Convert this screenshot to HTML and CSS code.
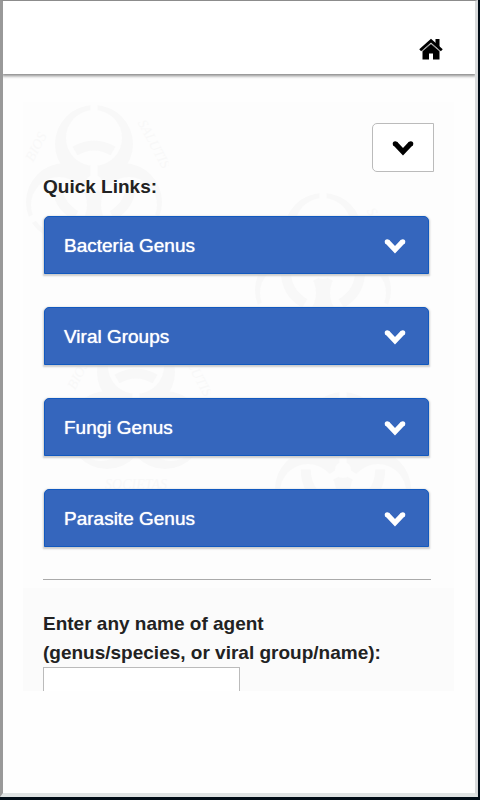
FILE: index.html
```html
<!DOCTYPE html>
<html lang="en">
<head>
<meta charset="utf-8">
<meta name="viewport" content="width=device-width, initial-scale=1">
<title>Quick Links</title>
<link rel="stylesheet" href="styles.css">
</head>
<body>
<svg class="defs" aria-hidden="true">
  <symbol id="chevron" viewBox="0 0 22 16"><path d="M3.200 3.500 11 11.800 18.800 3.500" fill="none" stroke="currentColor" stroke-width="5.200" stroke-linejoin="miter"/><circle cx="3.200" cy="3.700" r="2.500" fill="currentColor"/><circle cx="18.800" cy="3.700" r="2.500" fill="currentColor"/></symbol>
</svg>
<div class="frame">
  <header class="topbar">
    <a class="home" href="#" aria-label="Home">
      <svg viewBox="0 0 24 22"><path d="M12 5.600 3.500 12.600V21.500H10V15.500h4v6h6.500V12.600z"/><path d="M1.200 12.200 12 2.600 22.800 12.200" fill="none" stroke="#000" stroke-width="2.800"/><path d="M16.500 1h4v9L16.500 6.500z"/><path d="M3.400 13.200 12 5.700 20.600 13.200" fill="none" stroke="#bbb" stroke-width="0.800"/></svg>
    </a>
  </header>
  <main class="panel">
    <section class="links">
      <div class="marks" aria-hidden="true">
        <svg class="seal seal-a" viewBox="-75 -85 150 170">
          <mask id="cut">
            <rect x="-75" y="-85" width="150" height="170" fill="#fff"/>
            <circle cx="0" cy="-45" r="28" fill="#000"/>
            <circle cx="35" cy="22" r="28" fill="#000"/>
            <circle cx="-35" cy="22" r="28" fill="#000"/>
            <path d="M0 -60V-85M0 -18V0M0 0 74 43M0 0-74 43" stroke="#000" stroke-width="7"/>
            <circle r="8" fill="#000"/>
          </mask>
          <g id="seal" fill="currentColor">
            <g mask="url(#cut)">
              <circle cx="0" cy="-39" r="39"/>
              <circle cx="29" cy="19" r="39"/>
              <circle cx="-29" cy="19" r="39"/>
            </g>
            <g fill="none" stroke="currentColor" stroke-width="10">
              <path d="M-19-32Q0-43 19-32"/>
              <path d="M-19-32Q0-43 19-32" transform="rotate(120)"/>
              <path d="M-19-32Q0-43 19-32" transform="rotate(240)"/>
            </g>
            <g class="motto" text-anchor="middle">
              <text transform="translate(-54 -34) rotate(-62)">BIOS</text>
              <text transform="translate(56 -37) rotate(62)">SALUTIS</text>
              <text x="0" y="78">SOCIETAS</text>
            </g>
          </g>
        </svg>
        <svg class="seal seal-b" viewBox="-75 -85 150 170"><use href="#seal"/></svg>
        <svg class="seal seal-c" viewBox="-75 -85 150 170"><use href="#seal"/></svg>
        <svg class="seal seal-d" viewBox="-75 -85 150 170"><use href="#seal"/></svg>
      </div>
      <button class="toggle" type="button" aria-label="Toggle menu"><svg class="chevron"><use href="#chevron"/></svg></button>
      <h2 class="heading">Quick Links:</h2>
      <nav class="groups">
        <button class="group" type="button">Bacteria Genus<svg class="chevron"><use href="#chevron"/></svg></button>
        <button class="group" type="button">Viral Groups<svg class="chevron"><use href="#chevron"/></svg></button>
        <button class="group" type="button">Fungi Genus<svg class="chevron"><use href="#chevron"/></svg></button>
        <button class="group" type="button">Parasite Genus<svg class="chevron"><use href="#chevron"/></svg></button>
      </nav>
      <hr class="rule">
    </section>
    <form class="search">
      <label for="agent">Enter any name of agent<br>(genus/species, or viral group/name):</label>
      <input id="agent" type="text">
    </form>
  </main>
</div>
</body>
</html>
```
FILE: styles.css
```css
* { box-sizing: border-box; }

body {
  margin: 0;
  background: #000c16;
  font-family: "Liberation Sans", Arial, sans-serif;
  font-size: 19px;
  color: #222;
}

.defs {
  position: absolute;
  width: 0;
  height: 0;
}

.frame {
  display: flex;
  flex-direction: column;
  height: calc(100vh - 3px);
  margin-right: 2px;
  padding-bottom: 102px;
  border: solid;
  border-width: 1px 3px 4px 3px;
  border-color: #8c8c8c #d8dadb #dfe3e3 #999;
  background: #fefefe;
}

.topbar {
  display: flex;
  flex: none;
  justify-content: flex-end;
  align-items: flex-end;
  height: 73px;
  padding: 0 32px 14px;
  background: #fff;
  box-shadow: 0 1px 3px 1px #888;
  clip-path: inset(0 0 -8px 0);
}

.home { display: block; }

.home svg {
  display: block;
  width: 24px;
  height: 22px;
}

.panel {
  flex: 1;
  min-height: 0;
  margin: 28px 21px 0 20px;
  overflow: hidden;
  background: #fbfbfb;
}

.links {
  position: relative;
  display: flex;
  flex-direction: column;
  padding: 21px 20px 8px;
  background: #fdfdfd;
}

.marks {
  position: absolute;
  inset: 0;
  overflow: hidden;
  color: #f8f8f8;
}

.seal {
  position: absolute;
  width: 150px;
  height: 170px;
}

.seal-a { left: -4px; top: -4px; }
.seal-b { left: 225px; top: 84px; }
.seal-c { left: 38px; top: 224px; }
.seal-d { left: 245px; top: 283px; }

.motto {
  font: italic 14px "Liberation Serif", serif;
}

.toggle,
.heading,
.groups,
.rule { position: relative; }

.toggle {
  display: flex;
  align-self: flex-end;
  align-items: center;
  justify-content: center;
  width: 62px;
  height: 49px;
  padding: 0;
  border: 1px solid #bbb;
  border-radius: 5px 0 0 5px;
  background: #fff;
  color: #000;
}

.chevron {
  width: 22px;
  height: 16px;
}

.heading {
  margin: 0;
  font-size: 19px;
  line-height: 29px;
}

.groups {
  display: grid;
  gap: 33px;
  margin: 15px 5px 0 1px;
}

.group {
  display: flex;
  align-items: center;
  justify-content: space-between;
  height: 58px;
  padding: 1px 22px 0 19px;
  border: 1px solid #1259bf;
  border-radius: 5px 5px 0 0;
  background: #3566bd;
  box-shadow: 0 1px 2px 1px #ccc;
  color: #fff;
  font-family: inherit;
  font-size: 19px;
  text-shadow: 0 0 1px #fff;
}

.rule {
  width: calc(100% - 3px);
  margin: 32px 0 0;
  border: 0;
  border-top: 1px solid #aaa;
}

.search {
  padding: 21px 20px 0;
  font-weight: bold;
  line-height: 29px;
}

.search label { display: block; }

.search input {
  display: block;
  width: 197px;
  height: 48px;
  border: 1px solid #bbb;
  background: #fff;
  font: inherit;
}
```
